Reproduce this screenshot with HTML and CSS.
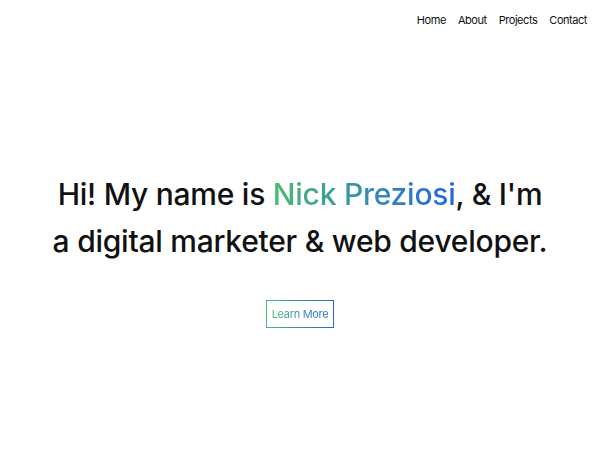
FILE: index.html
```html
<!DOCTYPE html>
<html lang="en">
<head>
<meta charset="utf-8">
<title>Nick Preziosi</title>
<link rel="stylesheet" href="styles.css">
</head>
<body>
<header class="site-header">
  <nav class="nav">
    <a href="#" class="nav-link">Home</a>
    <a href="#" class="nav-link">About</a>
    <a href="#" class="nav-link">Projects</a>
    <a href="#" class="nav-link">Contact</a>
  </nav>
</header>
<main class="hero">
  <h1 class="hero-title">Hi! My name is <span class="gradient-text">Nick Preziosi</span>, &amp; I'm<br>a digital marketer &amp; web developer.</h1>
  <a href="#" class="btn-outline"><span class="gradient-text">Learn More</span></a>
</main>
</body>
</html>
```
FILE: styles.css
```css
* { box-sizing: border-box; }
html, body { margin: 0; padding: 0; }
body {
  font-family: Inter, "Noto Sans", sans-serif;
  color: #111;
  background: #fff;
  width: 600px;
  height: 450px;
}
.site-header {
  display: flex;
  justify-content: flex-end;
  padding: 13px 13px 0 0;
}
.nav {
  display: flex;
  gap: 12px;
}
.nav-link {
  font-size: 11px;
  letter-spacing: -0.45px;
  color: #111;
  text-decoration: none;
  line-height: 15px;
}
.hero {
  display: flex;
  flex-direction: column;
  align-items: center;
  padding-top: 143px;
}
.hero-title {
  margin: 0;
  font-size: 30px;
  font-weight: 500;
  line-height: 47px;
  text-align: center;
  letter-spacing: -0.25px;
}
.gradient-text {
  background: linear-gradient(90deg, #48bb6e, #2563eb);
  -webkit-background-clip: text;
  background-clip: text;
  color: transparent;
}
.btn-outline {
  margin-top: 35px;
  display: inline-block;
  padding: 6px 5px;
  font-size: 11px;
  letter-spacing: -0.3px;
  line-height: 14px;
  text-decoration: none;
  border: 1px solid transparent;
  background:
    linear-gradient(#fff, #fff) padding-box,
    linear-gradient(90deg, #48bb6e, #2563eb) border-box;
}
```
